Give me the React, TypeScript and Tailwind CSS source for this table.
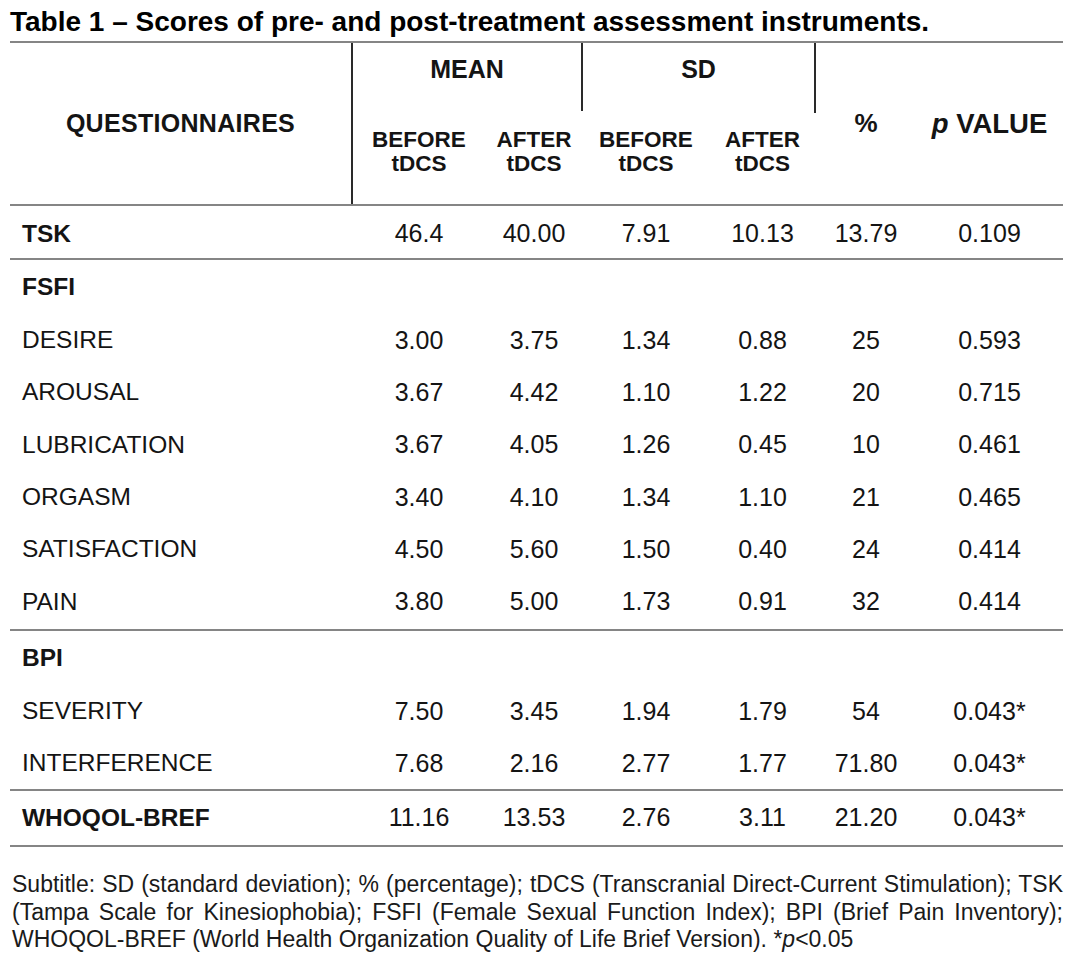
import React from "react";

type Row = { label: string; bold?: boolean; values?: string[]; h: string };

const W = ["w-[343px]", "w-[132px]", "w-[98px]", "w-[126px]", "w-[107px]", "w-[100px]", "w-[147px]"];

function DataRow({ label, bold, values, h }: Row) {
  return (
    <div className={`flex items-center ${h}`}>
      <div className={`${W[0]} pl-[12px] text-[24.5px] ${bold ? "font-bold" : ""}`}>{label}</div>
      {values
        ? values.map((v, i) => (
            <div key={i} className={`${W[i + 1]} text-center text-[25px]`}>
              {v}
            </div>
          ))
        : null}
    </div>
  );
}

const Line = () => <div className="h-[2px] w-full bg-[#858585]" />;

export default function App() {
  const fsfi: Row[] = [
    { label: "DESIRE", values: ["3.00", "3.75", "1.34", "0.88", "25", "0.593"], h: "h-[52.3px]" },
    { label: "AROUSAL", values: ["3.67", "4.42", "1.10", "1.22", "20", "0.715"], h: "h-[52.3px]" },
    { label: "LUBRICATION", values: ["3.67", "4.05", "1.26", "0.45", "10", "0.461"], h: "h-[52.3px]" },
    { label: "ORGASM", values: ["3.40", "4.10", "1.34", "1.10", "21", "0.465"], h: "h-[52.3px]" },
    { label: "SATISFACTION", values: ["4.50", "5.60", "1.50", "0.40", "24", "0.414"], h: "h-[52.3px]" },
    { label: "PAIN", values: ["3.80", "5.00", "1.73", "0.91", "32", "0.414"], h: "h-[52.3px]" },
  ];
  return (
    <div className="min-h-screen w-[1080px] bg-white pl-[10px] pt-[6px] font-['Liberation_Sans',Arial,sans-serif] text-[#141414]">
      <div className="text-[28px] font-bold leading-[32px] text-black">
        Table 1 – Scores of pre- and post-treatment assessment instruments.
      </div>
      <div className="mt-[3px] w-[1053px]">
        <Line />
        {/* header */}
        <div className="flex h-[161px] font-bold">
          <div className="flex w-[343px] items-center justify-center border-r-2 border-[#2a2a2a] text-[25px] tracking-[0.3px]">
            QUESTIONNAIRES
          </div>
          <div className="flex w-[230px] flex-col">
            <div className="h-[68px] border-r-2 border-[#2a2a2a] pt-[12px] text-center text-[25px] leading-[29px]">
              MEAN
            </div>
            <div className="flex pt-[17px] text-[22.5px] leading-[24px]">
              <div className="w-[132px] text-center">
                <div>BEFORE</div>
                <div>tDCS</div>
              </div>
              <div className="w-[98px] text-center">
                <div>AFTER</div>
                <div>tDCS</div>
              </div>
            </div>
          </div>
          <div className="flex w-[233px] flex-col">
            <div className="h-[70px] border-r-2 border-[#2a2a2a] pt-[12px] text-center text-[25px] leading-[29px]">
              SD
            </div>
            <div className="flex pt-[15px] text-[22.5px] leading-[24px]">
              <div className="w-[126px] text-center">
                <div>BEFORE</div>
                <div>tDCS</div>
              </div>
              <div className="w-[107px] text-center">
                <div>AFTER</div>
                <div>tDCS</div>
              </div>
            </div>
          </div>
          <div className="flex w-[100px] items-center justify-center text-[26px]">%</div>
          <div className="flex w-[147px] items-center justify-center text-[27.5px]">
            <i>p</i>&nbsp;VALUE
          </div>
        </div>
        <Line />
        <div className="pt-[4px]">
          <DataRow label="TSK" bold values={["46.4", "40.00", "7.91", "10.13", "13.79", "0.109"]} h="h-[48px]" />
        </div>
        <Line />
        <div className="pb-[1px]">
          <DataRow label="FSFI" bold h="h-[54.3px]" />
          {fsfi.map((r) => (
            <DataRow key={r.label} {...r} />
          ))}
        </div>
        <Line />
        <DataRow label="BPI" bold h="h-[54px]" />
        <DataRow label="SEVERITY" values={["7.50", "3.45", "1.94", "1.79", "54", "0.043*"]} h="h-[53px]" />
        <DataRow label="INTERFERENCE" values={["7.68", "2.16", "2.77", "1.77", "71.80", "0.043*"]} h="h-[51px]" />
        <Line />
        <DataRow label="WHOQOL-BREF" bold values={["11.16", "13.53", "2.76", "3.11", "21.20", "0.043*"]} h="h-[54px]" />
        <Line />
        <div className="ml-[2px] mt-[24px] w-[1051px] text-[23px] leading-[27.5px] text-[#1a1a1a]">
          <div className="text-justify [text-align-last:justify]">
            Subtitle: SD (standard deviation); % (percentage); tDCS (Transcranial Direct-Current Stimulation); TSK
          </div>
          <div className="text-justify [text-align-last:justify]">
            (Tampa Scale for Kinesiophobia); FSFI (Female Sexual Function Index); BPI (Brief Pain Inventory);
          </div>
          <div>
            WHOQOL-BREF (World Health Organization Quality of Life Brief Version). *<i>p</i>&lt;0.05
          </div>
        </div>
      </div>
    </div>
  );
}
